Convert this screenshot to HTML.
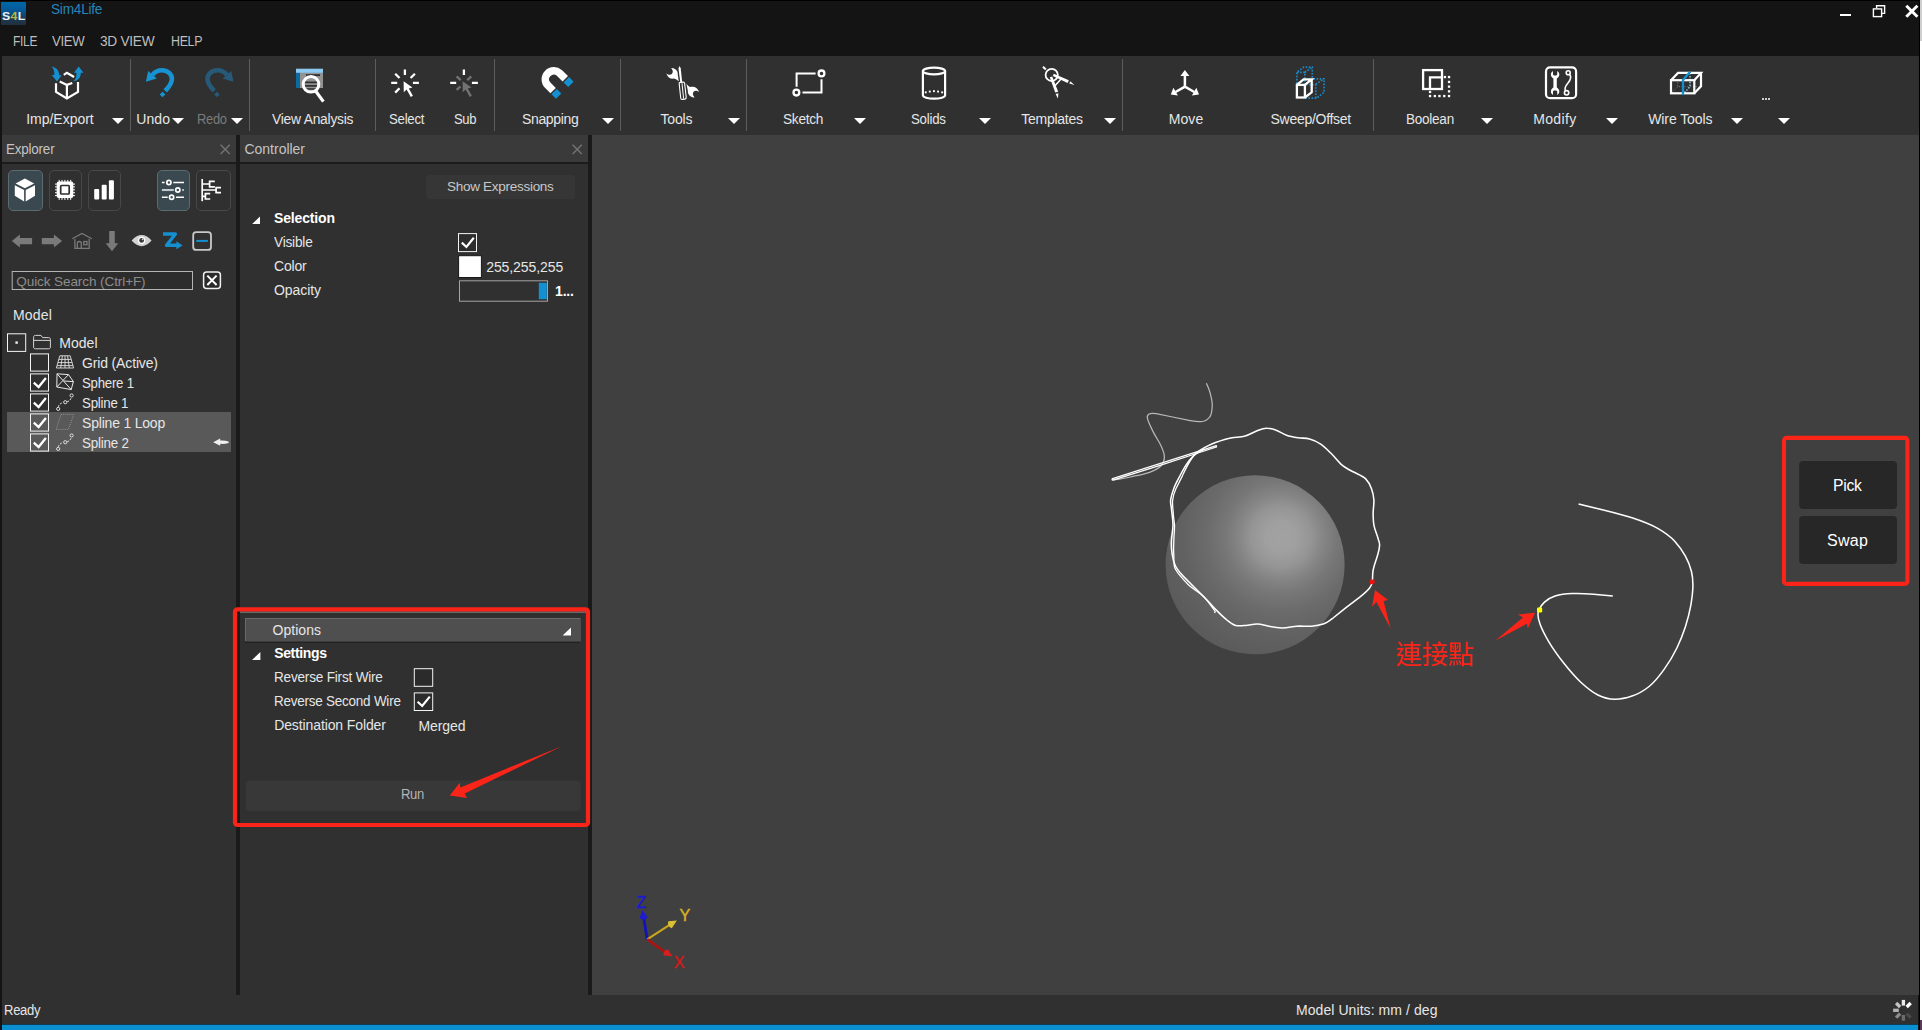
<!DOCTYPE html>
<html lang="en">
<head>
<meta charset="utf-8">
<title>Sim4Life</title>
<style>
html,body{margin:0;padding:0;background:#141414;}
body{width:1922px;height:1030px;overflow:hidden;font-family:"Liberation Sans","Noto Sans CJK TC",sans-serif;}
#app{position:relative;width:1922px;height:1030px;overflow:hidden;background:#141414;}
.t{position:absolute;white-space:pre;line-height:20px;height:20px;font-family:"Liberation Sans","Noto Sans CJK TC",sans-serif;}
.b{position:absolute;box-sizing:border-box;}
svg{position:absolute;overflow:visible;}
.sep{position:absolute;top:59px;width:1px;height:72px;background:#5c5c5c;}
.dd{position:absolute;top:118px;width:0;height:0;border-left:6px solid transparent;border-right:6px solid transparent;border-top:6px solid #fff;}
.cb{position:absolute;box-sizing:border-box;width:19px;height:19px;border:1px solid #e8e8e8;background:#2b2b2b;}
</style>
</head>

<body>
<div id="app">
<!-- window chrome -->
<div class="b" style="left:2px;top:56px;width:1917px;height:79px;background:#303030"></div>
<!-- explorer panel -->
<div class="b" style="left:2px;top:135px;width:234px;height:860px;background:#303030"></div>
<div class="b" style="left:2px;top:135px;width:234px;height:27px;background:#3a3a3a"></div>
<div class="b" style="left:2px;top:162px;width:234px;height:2px;background:#1c1c1c"></div>
<!-- controller panel -->
<div class="b" style="left:240px;top:135px;width:348px;height:860px;background:#303030"></div>
<div class="b" style="left:240px;top:135px;width:348px;height:27px;background:#3a3a3a"></div>
<div class="b" style="left:240px;top:162px;width:348px;height:2px;background:#1c1c1c"></div>
<!-- dividers -->
<div class="b" style="left:236px;top:135px;width:4px;height:860px;background:#1a1a1a"></div>
<div class="b" style="left:588px;top:135px;width:4px;height:860px;background:#1a1a1a"></div>
<!-- viewport -->
<div class="b" style="left:592px;top:135px;width:1327px;height:860px;background:#404040"></div>
<!-- status bar -->
<div class="b" style="left:2px;top:995px;width:1916px;height:30px;background:#303030"></div><div class="b" style="left:2px;top:1024px;width:1916px;height:1px;background:#123a52"></div>
<div class="b" style="left:2px;top:1025px;width:1916px;height:5px;background:#0a8fd0"></div>
<!-- right edge strips / top line -->
<div class="b" style="left:0;top:0;width:1922px;height:1px;background:#000"></div>
<div class="b" style="left:1919px;top:0;width:1px;height:1030px;background:#000"></div>
<div class="b" style="left:1920px;top:0;width:2px;height:1030px;background:#fff"></div>
<div class="b" style="left:1920px;top:0;width:2px;height:41px;background:#cfcfcf"></div>
<div class="b" style="left:1920px;top:1020px;width:2px;height:10px;background:#5a3a58"></div>
<!-- logo -->
<div class="b" style="left:1px;top:2px;width:25px;height:23px;border-radius:1px;background:linear-gradient(#0068a8 0%,#06599a 35%,#0d4a7a 55%,#1b3a58 70%,#222f3c 100%)"></div>
<span class="t" style="left:1.5px;top:5.800px;font-size:11px;font-weight:700;color:#e8f0f8;letter-spacing:0.3px;transform:scaleX(1.12);transform-origin:0 0">S<span style="color:#b8b840">4</span>L</span>
<!-- window buttons -->
<div class="b" style="left:1840px;top:13.5px;width:11px;height:2.7px;background:#fff"></div>
<svg style="left:1870px;top:2px" width="18" height="18" viewBox="1870 2 18 18"><path d="M1876.6 8.2V5.7h8v7.7h-2.6" fill="none" stroke="#fff" stroke-width="1.4"/><rect x="1873.4" y="8.9" width="8.2" height="7.7" fill="none" stroke="#fff" stroke-width="1.4"/></svg>
<svg style="left:1903px;top:2px" width="18" height="18" viewBox="1903 2 18 18"><path d="M1906.3 5.7L1917.4 16.8M1917.4 5.7L1906.3 16.8" fill="none" stroke="#fff" stroke-width="2.9"/></svg>
<!-- toolbar separators -->
<div class="sep" style="left:130px"></div><div class="sep" style="left:249px"></div><div class="sep" style="left:375px"></div><div class="sep" style="left:494px"></div><div class="sep" style="left:620px"></div><div class="sep" style="left:746px"></div><div class="sep" style="left:1122px"></div><div class="sep" style="left:1373px"></div>
<!-- dropdown arrows -->
<div class="dd" style="left:111.5px"></div><div class="dd" style="left:171.5px"></div><div class="dd" style="left:230.5px"></div><div class="dd" style="left:601.5px"></div><div class="dd" style="left:727.5px"></div><div class="dd" style="left:853.5px"></div><div class="dd" style="left:978.5px"></div><div class="dd" style="left:1103.5px"></div><div class="dd" style="left:1480.5px"></div><div class="dd" style="left:1605.5px"></div><div class="dd" style="left:1730.5px"></div><div class="dd" style="left:1777.5px"></div>
<!-- ellipsis -->
<div class="b" style="left:1762px;top:98px;width:2px;height:2px;background:#ccc"></div><div class="b" style="left:1765px;top:98px;width:2px;height:2px;background:#ccc"></div><div class="b" style="left:1768px;top:98px;width:2px;height:2px;background:#ccc"></div>
<!-- toolbar icons: one svg in page coordinates -->
<svg style="left:0;top:56px" width="1918" height="79" viewBox="0 56 1918 79">
<g fill="none" stroke="#fff" stroke-width="2.2" stroke-linejoin="miter">
<!-- imp/export -->
<path d="M56 83.2V91.9L66.9 98.5L78 91.9V82"/>
<path d="M66.9 98.5V84.9L59.7 81.4M66.9 84.9L72.3 83"/>
<path d="M63.8 74.9L66.9 72.7L74.1 77"/>
</g>
<g fill="#1490d0" stroke="none">
<path d="M51.6 66.4C56.5 67.3 59.3 70.8 59.2 75.2L61.6 75.2L57 81.6L51.7 75L54.3 75.1C54.6 71.5 54 69 51.6 66.4Z"/>
<path d="M78.7 66.4L83.5 72.8L80.8 72.8C80.9 77.6 78.2 80.6 73 81.6C76 79.3 76.6 76.5 76.5 72.8L74 72.8Z"/>
</g>
<!-- undo -->
<g id="undo" fill="#1793d3">
<path d="M145.9 81.8L148.2 70.9L156.8 78.6Z"/>
<path d="M152.5 74.9C154.8 71.9 158 70.3 161.9 70.3C167.5 70.3 171.9 74 171.9 78.9C171.900 83.400 169.200 86.600 165.200 90.800" fill="none" stroke="#1793d3" stroke-width="4.6"/>
<path d="M162.500 91.700L165.300 94.500L162.500 97.300L159.700 94.500Z"/>
</g>
<!-- redo: mirror about x=189.7 -->
<g transform="translate(379.4 0) scale(-1 1)" fill="#265a78">
<path d="M145.9 81.8L148.2 70.9L156.8 78.6Z"/>
<path d="M152.5 74.9C154.8 71.9 158 70.3 161.9 70.3C167.5 70.3 171.9 74 171.9 78.9C171.900 83.400 169.200 86.600 165.200 90.800" fill="none" stroke="#265a78" stroke-width="4.6"/>
<path d="M162.500 91.700L165.300 94.500L162.500 97.300L159.700 94.500Z"/>
</g>
<!-- view analysis -->
<rect x="296" y="72.8" width="27" height="15.2" fill="#929292"/>
<rect x="296" y="68.7" width="27" height="4.2" fill="#8ccaf2"/>
<rect x="296" y="72.9" width="4" height="15.1" fill="#0b6a9e"/>
<rect x="306" y="74.2" width="14" height="1.8" fill="#303030"/>
<circle cx="311" cy="84.3" r="7.8" fill="#929292"/>
<path d="M304 82.3h14M304 85.8h14M305 89h12" stroke="#303030" stroke-width="1.7"/>
<circle cx="311" cy="84.3" r="7.8" fill="none" stroke="#fff" stroke-width="3"/>
<path d="M315.8 91.2L323.4 101.6" stroke="#fff" stroke-width="3.2"/>
<!-- select -->
<g id="sel" stroke="#fff" stroke-width="2.3" fill="#fff">
<path d="M404.9 69.4V74.9M391.2 82.9H397.2M412.9 82.9H418.9" />
<path d="M395.2 73.7L399.5 78M414.9 73.7L410.6 78M395.2 92.6L399.5 88.3"/>
<path d="M403.6 81.2L403.8 92.2L406.6 89.6L410.8 96.9L412.9 95.7L408.8 88.6L412.4 87.4Z" stroke="none"/>
</g>
<!-- sub -->
<g stroke="#fff" stroke-width="2.3" fill="none">
<path d="M463.9 69.4V74.9M450.2 82.9H456.2M471.9 82.9H477.9" />
</g>
<g stroke="#727272" stroke-width="2.3" fill="#727272">
<path d="M456.600 76.300L460.700 80.100M471.300 76.300L467.200 80.100M456.600 89.900L460.500 86.500"/>
<path d="M462.6 81.2L462.8 92.2L465.6 89.6L469.8 96.9L471.9 95.7L467.8 88.6L471.4 87.4Z" stroke="none"/>
</g>
<!-- snapping magnet -->
<path d="M565.3 78.8L559.5 73A8.5 8.5 0 0 0 547.5 85L553.1 90.6" fill="none" stroke="#fff" stroke-width="7.6"/>
<path d="M566.300 79.800L570.900 84.400" fill="none" stroke="#1490d0" stroke-width="7.600"/>
<path d="M554.100 91.600L558.600 96.100" fill="none" stroke="#1490d0" stroke-width="7.600"/>
<!-- tools -->
<g fill="#fff" stroke="none">
<path d="M679.5 66L680.7 68.3L682.2 82.4L680.3 82.6L678.5 68.6Z"/>
<path d="M679.2 83.6C679 82.8 679.6 82.5 680.4 82.4L683 82.1C683.9 82 684.5 82.4 684.6 83.2L686.2 97.3C686.3 98.4 685.7 99 684.8 99.1L682.3 99.4C681.3 99.5 680.8 98.9 680.7 98Z" fill="none" stroke="#fff" stroke-width="1.1"/>
<path d="M682 83.2L683.6 98.6" stroke="#fff" stroke-width="1" fill="none"/>
<path d="M671.2 68C673.5 67.8 676.2 69 677.3 71.5C678 73.2 677.6 74.6 678 76L678.8 81.5C676.5 79.5 675 78.6 673.6 78.6C670.6 79 667.6 77.5 666.3 73.2C668 74.8 670.3 75.3 671.8 74C673.2 72.6 673.2 70.2 671.2 68Z"/>
<path d="M686.4 83.5C688 86 689.5 87.2 691.2 86.8C694.6 86 698 88 699.2 92.2C697.5 90.6 695.2 90.2 693.8 91.5C692.4 92.9 692.5 95.3 694.6 97.5C692.2 97.7 689.6 96.6 688.4 94.1C687.6 92.4 688 90.9 687.6 89.5Z"/>
</g>
<!-- sketch -->
<g fill="none" stroke="#fff">
<path d="M815.600 73.500H796.600V86.700M821.500 79.200V92.600H802.500" stroke-width="2"/>
<circle cx="821.500" cy="73.400" r="2.900" stroke-width="2.300"/>
<circle cx="796.400" cy="92.600" r="2.900" stroke-width="2.300"/>
</g>
<!-- solids -->
<g fill="none" stroke="#fff" stroke-width="2.2">
<ellipse cx="934" cy="71" rx="11.1" ry="3.4"/>
<path d="M922.9 71V95.3A11.1 3.4 0 0 0 945.1 95.3V71"/>
</g>
<g fill="#fff"><rect x="924.8" y="91.4" width="1.9" height="1.9"/><rect x="928.8" y="90.6" width="1.9" height="1.9"/><rect x="933" y="90.2" width="1.9" height="1.9"/><rect x="937.1" y="90.6" width="1.9" height="1.9"/><rect x="941.2" y="91.4" width="1.9" height="1.9"/></g>
<!-- templates: compass -->
<g fill="none" stroke="#fff">
<circle cx="1051.7" cy="74.9" r="6.1" stroke-width="1.8"/>
<path d="M1043 66.8L1045.8 69.4" stroke-width="2"/>
<path d="M1055 85.8L1061.5 78.4" stroke-width="1.5"/>
</g>
<g fill="#fff" stroke="none">
<path d="M1049.8 77.3L1052.2 76.6L1058.2 91.8L1055.2 92.6Z"/>
<path d="M1055.6 94L1058.4 93.2L1057.9 98.6Z"/>
<path d="M1052.8 76L1053.8 73.8L1068.8 80.3L1067.6 83Z"/>
<path d="M1069.3 83.6L1070.3 81.2L1074.4 84.9Z"/>
</g>
<!-- move -->
<g fill="none" stroke="#fff" stroke-width="2.5">
<path d="M1184.9 75V86.7L1175.5 92M1184.9 86.7L1194.3 92"/>
</g>
<g fill="#fff"><path d="M1184.9 70.1L1189.4 75.9H1180.4Z"/><path d="M1170.8 94.4L1173.4 87.7L1177.9 95.6Z"/><path d="M1199 94.4L1196.4 87.7L1191.9 95.6Z"/></g>
<!-- sweep/offset -->
<g fill="none" stroke="#1c88c4" stroke-width="1.7" stroke-dasharray="1.6 1.5">
<path d="M1296.9 83.5V72.2L1303.6 67.2H1312.3V78"/>
<path d="M1297 72.4H1304.9V83.4M1304.9 72.2L1312 67.4"/>
<path d="M1313.4 78.8H1324.1V92.3L1316.6 98.2H1306"/>
<path d="M1306 84.6H1315.8V98M1315.8 84.3L1323.8 79"/>
</g>
<g fill="none" stroke="#fff" stroke-width="2.3">
<rect x="1296.900" y="84.900" width="8" height="12.600"/>
<path d="M1296.900 84.900L1303.600 79.300H1311.700L1304.900 84.900M1311.700 79.300V92.300L1304.900 97.500"/>
</g>
<!-- boolean -->
<g fill="none" stroke="#fff" stroke-width="2.3">
<rect x="1423.1" y="70.1" width="18.9" height="18.9"/>
<path d="M1442 77.3H1430V89"/>
</g>
<g fill="#fff">
<rect x="1443.8" y="75.9" width="2.3" height="2.3"/><rect x="1447.9" y="75.9" width="2.3" height="2.3"/>
<rect x="1447.9" y="80.8" width="2.3" height="2.3"/><rect x="1447.9" y="85.5" width="2.3" height="2.3"/><rect x="1447.9" y="90.2" width="2.3" height="2.3"/><rect x="1447.9" y="94.9" width="2.3" height="2.3"/>
<rect x="1428.9" y="90.8" width="2.3" height="2.3"/><rect x="1428.9" y="94.9" width="2.3" height="2.3"/><rect x="1433.7" y="94.9" width="2.3" height="2.3"/><rect x="1438.3" y="94.9" width="2.3" height="2.3"/><rect x="1443.1" y="94.9" width="2.3" height="2.3"/>
</g>
<!-- modify -->
<rect x="1546" y="67.4" width="30.1" height="30.8" rx="4" ry="4" fill="none" stroke="#fff" stroke-width="2.2"/>
<g fill="#fff">
<path d="M1553 70.9C1551.2 72 1550.6 73.8 1551 75.4C1551.4 77 1552.4 77.6 1553.4 78.4V87.6C1552.4 88.4 1551.4 89 1551 90.6C1550.6 92.2 1551.2 94 1553 95.1V91.6C1553 90.2 1557.2 90.2 1557.2 91.6V95.1C1559 94 1559.6 92.2 1559.2 90.6C1558.8 89 1557.8 88.4 1556.8 87.6V78.4C1557.8 77.6 1558.8 77 1559.2 75.4C1559.6 73.8 1559 72 1557.2 70.9V74.4C1557.2 75.8 1553 75.8 1553 74.4Z"/>
</g>
<g fill="none" stroke="#fff" stroke-width="1.6">
<circle cx="1568.2" cy="72.7" r="2"/>
<circle cx="1566.6" cy="92.8" r="2.2"/>
<path d="M1569.6 74.3C1571.6 77 1570.6 80 1568 83C1565.4 86 1564 88 1565.4 90.8"/>
</g>
<!-- wire tools -->
<g fill="none" stroke="#8a8a8a" stroke-width="0.8" stroke-dasharray="1.2 1.6">
<path d="M1677.7 79.5V86.7H1701M1677.7 86.7L1671 93.5"/>
</g>
<g fill="none" stroke="#8cc6e8" stroke-width="1.5" stroke-dasharray="1.5 1.4">
<path d="M1690 73V86.7L1683.6 93.5"/>
</g>
<g fill="none" stroke="#fff" stroke-width="2.2">
<rect x="1671" y="80.200" width="23.300" height="13.100"/>
<path d="M1671 80.200L1678 72.900H1701L1694.300 80.200M1701 72.900V86.300L1694.300 93.300"/>
</g>
<path d="M1683 95V80L1690.4 71.6" fill="none" stroke="#1490d0" stroke-width="2.3"/>
</svg>
<!-- explorer -->
<svg style="left:220px;top:144px" width="11" height="11" viewBox="0 0 11 11"><path d="M0.6 0.8L9.8 10M9.8 0.8L0.6 10" stroke="#727272" stroke-width="1.500" fill="none"/></svg>
<svg style="left:572px;top:144px" width="11" height="11" viewBox="0 0 11 11"><path d="M0.6 0.8L9.8 10M9.8 0.8L0.6 10" stroke="#727272" stroke-width="1.500" fill="none"/></svg>
<div class="b" style="left:8px;top:170px;width:35px;height:41px;border:1px solid #5b6b72;border-radius:5px;background:#3a494f"></div>
<div class="b" style="left:49px;top:170px;width:33px;height:41px;border:1px solid #484848;border-radius:5px"></div>
<div class="b" style="left:88px;top:170px;width:33px;height:41px;border:1px solid #484848;border-radius:5px"></div>
<div class="b" style="left:157px;top:170px;width:33px;height:41px;border:1px solid #5b6b72;border-radius:5px;background:#3a494f"></div>
<div class="b" style="left:196px;top:170px;width:35px;height:41px;border:1px solid #484848;border-radius:5px"></div>
<svg style="left:0;top:164px" width="236" height="300" viewBox="0 164 236 300">
<!-- cube -->
<g fill="#fff">
<path d="M24.9 178.6L34.2 183.4L24.9 188.2L15.6 183.4Z"/>
<path d="M14.8 185.2L24.1 190V201.4L14.8 195.8Z"/>
<path d="M35 185.2L25.7 190V201.4L35 195.8Z"/>
</g>
<!-- chip -->
<g fill="#fff">
<rect x="56.7" y="181.5" width="16.6" height="16.6" rx="2"/>
<g id="teeth">
<rect x="58.7" y="179.9" width="1" height="20"/><rect x="61.5" y="179.9" width="1" height="20"/><rect x="64.4" y="179.9" width="1" height="20"/><rect x="67.3" y="179.9" width="1" height="20"/><rect x="70.2" y="179.9" width="1" height="20"/>
<rect x="55" y="183.6" width="20" height="1"/><rect x="55" y="186.4" width="20" height="1"/><rect x="55" y="189.3" width="20" height="1"/><rect x="55" y="192.2" width="20" height="1"/><rect x="55" y="195.1" width="20" height="1"/>
</g>
</g>
<rect x="60.7" y="185.5" width="8.5" height="8.5" rx="0.8" fill="#fff" stroke="#2e2e2e" stroke-width="1.7"/>
<!-- bars -->
<g fill="#fff"><rect x="94.2" y="189" width="5" height="10.6" rx="1"/><rect x="101.7" y="184.7" width="5" height="14.9" rx="1"/><rect x="108.9" y="180.3" width="5" height="19.3" rx="1"/></g>
<!-- sliders -->
<g fill="none" stroke="#fff" stroke-width="1.5">
<path d="M161.9 182.5H164.6M173.3 182.5H184"/><circle cx="168.9" cy="182.5" r="2.1" stroke-width="1.7"/>
<path d="M161.9 190H173.8" stroke="#c3cacd" stroke-width="2.1"/><circle cx="177.8" cy="190" r="2.1" stroke-width="1.7"/><rect x="182.2" y="189.1" width="1.8" height="1.8" fill="#c3cacd" stroke="none"/>
<path d="M161.9 197.3H167.7M176 197.3H184"/><circle cx="171.6" cy="197.3" r="2.1" stroke-width="1.7"/>
</g>
<!-- tree icon -->
<g fill="none" stroke="#fff" stroke-width="1.7">
<path d="M202.2 179V201.2"/>
<path d="M202.2 184H209.5M214.8 181.3H209.6V186.8H214.8" />
<path d="M202.2 190H216M221 187.6H216.1V192.7H221"/>
<path d="M202.2 196.3H205.3M210.2 193.6H205.4V199H210.2"/>
</g>
<!-- nav icons -->
<g fill="#7a7a7a">
<path d="M11.8 241L19.9 234.6V237.9H32.1V244.2H19.9V247.4Z"/>
<path d="M62.1 241L53.9 234.6V237.9H41.8V244.2H53.9V247.4Z"/>
<path d="M109.2 231H114.8V243.2H118.3L112 251.2L105.7 243.2H109.2Z"/>
</g>
<g fill="none" stroke="#7a7a7a" stroke-width="1.3">
<path d="M72.2 238.8L82 233.4L91.8 238.8"/>
<path d="M74.9 239V248.4H89.2V239"/>
<path d="M77.3 248.4V243.5A2 2 0 0 1 81.3 243.5V248.4"/>
<rect x="83.8" y="241.5" width="3.2" height="3.2"/>
</g>
<!-- eye -->
<path d="M131.6 240.6C135 236.6 138.4 235 141.6 235C144.8 235 148.2 236.6 151.6 240.6C148.2 244.6 144.8 246.2 141.6 246.2C138.4 246.2 135 244.6 131.6 240.6Z" fill="#d2d2d2"/>
<circle cx="141.6" cy="240.4" r="3.6" fill="#fff"/>
<circle cx="141.6" cy="240.4" r="2.4" fill="#3a3a3a"/>
<circle cx="142.6" cy="239.4" r="0.8" fill="#d2d2d2"/>
<!-- z arrow -->
<path d="M163 234H175.400L166.600 245.300H177" fill="none" stroke="#1490d0" stroke-width="3.400" stroke-linejoin="round"/>
<path d="M176.4 241.3L182.6 245.4L176.4 249.2Z" fill="#1490d0"/>
<!-- minus box -->
<rect x="193.2" y="232.1" width="17.8" height="17.8" rx="3" fill="none" stroke="#c8c8c8" stroke-width="1.8"/>
<path d="M196.2 240.9H207.9" stroke="#1490d0" stroke-width="2"/>
<!-- search -->
<rect x="12.2" y="271.5" width="180.3" height="18" fill="#2c2c2c" stroke="#b4b4b4" stroke-width="1"/>
<rect x="203.6" y="272" width="16.8" height="16.4" rx="3" fill="#2a2a2a" stroke="#f0f0f0" stroke-width="1.5"/>
<path d="M207.3 275.6L216.6 285M216.6 275.6L207.3 285" stroke="#fff" stroke-width="2" fill="none"/>
<!-- tree -->
<rect x="7" y="412" width="224" height="40" fill="#595959"/>
<rect x="7.5" y="333.8" width="18.2" height="17.6" fill="none" stroke="#f4f4f4" stroke-width="1"/>
<rect x="15.400" y="341.400" width="2.400" height="2.400" fill="#f0f0f0"/>
<!-- folder -->
<path d="M33.6 337.2C33.6 336 34.2 335.4 35.4 335.4H41L42.6 337.6H48.6C49.8 337.6 50.4 338.2 50.4 339.4V347C50.4 348.2 49.8 348.8 48.6 348.8H35.4C34.2 348.8 33.6 348.2 33.6 347Z M33.6 340.4H50.4" fill="none" stroke="#d4d4d4" stroke-width="1"/>
<!-- checkboxes -->
<g fill="#2f2f2f" stroke="#f4f4f4" stroke-width="1">
<rect x="30.5" y="353.9" width="18" height="17.2"/><rect x="30.5" y="373.9" width="18" height="17.2"/><rect x="30.5" y="393.9" width="18" height="17.2"/>
<rect x="30.5" y="413.9" width="18" height="17.2" fill="#595959"/><rect x="30.5" y="433.9" width="18" height="17.2" fill="#595959"/>
</g>
<g fill="none" stroke="#fff" stroke-width="2.3">
<path d="M33.8 382.6L38.6 387L45.9 378"/><path d="M33.8 402.6L38.6 407L45.9 398"/><path d="M33.8 422.6L38.6 427L45.9 418"/><path d="M33.8 442.6L38.6 447L45.9 438"/>
</g>
<!-- grid icon -->
<g fill="none" stroke="#e0e0e0" stroke-width="0.9">
<path d="M59.8 355.8H70.2L73.6 368H56.4Z"/>
<path d="M58.8 359.4H71.2M57.9 362.6H72.1M57 365.6H73"/>
<path d="M62.4 355.8L60.7 368M65 355.8V368M67.6 355.8L69.3 368"/>
</g>
<!-- sphere icon -->
<g fill="none" stroke="#e8e8e8" stroke-width="1">
<path d="M57 373.8L68.5 374.6L73.4 381.6L71.2 389.6L56.8 387Z"/>
<path d="M57 373.8L71.2 389.6M56.8 387L68.5 374.6M64 381L73.4 381.6"/>
</g>
<!-- spline icon -->
<g id="spl" fill="none" stroke="#e0e0e0" stroke-width="1">
<circle cx="58.2" cy="408.9" r="1.6"/><circle cx="65.3" cy="402.2" r="1.6"/><circle cx="71.6" cy="395.5" r="1.6"/>
<path d="M58.4 406.8C58.8 404.6 60.6 403 63.4 402.6M67.2 401.8C69.6 401 70.8 399.6 71.2 397.6" stroke-dasharray="2 1.3"/>
</g>
<g fill="none" stroke="#e0e0e0" stroke-width="1" transform="translate(0 40)">
<circle cx="58.2" cy="408.9" r="1.6"/><circle cx="65.3" cy="402.2" r="1.6"/><circle cx="71.6" cy="395.5" r="1.6"/>
<path d="M58.4 406.8C58.8 404.6 60.6 403 63.4 402.6M67.2 401.8C69.6 401 70.8 399.6 71.2 397.6" stroke-dasharray="2 1.3"/>
</g>
<!-- loop icon -->
<path d="M61 414.4H73.8L68.4 429.4H56.2Z" fill="none" stroke="#9a9a9a" stroke-width="0.9" stroke-dasharray="1 1.1"/>
<!-- row arrow -->
<path d="M213.2 442.2L220.2 438.6V440.6C223 440.2 226 440.8 228.6 441.4V443C226 443.6 223 444.2 220.2 443.8V445.8Z" fill="#f0f0f0"/>
</svg>
<!-- controller -->
<div class="b" style="left:425.5px;top:175px;width:149.5px;height:23.5px;background:#363636;border-radius:4px"></div>
<svg style="left:240px;top:164px" width="348" height="700" viewBox="240 164 348 700">
<path d="M260 216.4V224H252.2Z" fill="#fff"/>
<rect x="458.5" y="233.600" width="18" height="18" fill="#2d2d2d" stroke="#f4f4f4" stroke-width="1"/>
<path d="M461.800 242.600L466.400 247L473.800 237.800" fill="none" stroke="#fff" stroke-width="2.2"/>
<rect x="458.600" y="255.700" width="22.800" height="21.800" fill="#fff" stroke="#181818" stroke-width="1"/>
<rect x="459.500" y="280.800" width="88" height="20.400" fill="#303030" stroke="#a4a4a4" stroke-width="1"/>
<rect x="538.800" y="282.800" width="8" height="16.400" fill="#1490d0"/>
<!-- options header -->
<rect x="245" y="618" width="335.500" height="24.700" fill="#6a6a6a"/>
<rect x="245" y="641.400" width="335.500" height="1.300" fill="#0c0c0c"/>
<rect x="246" y="619" width="334.500" height="22.400" fill="#4f4f4f"/>
<path d="M571 627.6V635.6H562.6Z" fill="#fff"/>
<path d="M260.4 652V660H252Z" fill="#fff"/>
<rect x="414.3" y="668.7" width="18.4" height="17.6" fill="#2b2b2b" stroke="#f4f4f4" stroke-width="1"/>
<rect x="414.3" y="692.9" width="18.4" height="17.6" fill="#2b2b2b" stroke="#f4f4f4" stroke-width="1"/>
<path d="M417.6 701.8L422.2 706L429.8 696.6" fill="none" stroke="#fff" stroke-width="2.2"/>
<rect x="245.8" y="780.6" width="335" height="30.4" rx="4" fill="#383838"/>
<!-- red annotations -->
<rect x="240" y="611.600" width="346" height="1" fill="#8e8e8e"/>
<rect x="235" y="609.300" width="353" height="215.700" rx="2.500" fill="none" stroke="#fa2418" stroke-width="4.200"/>
<path d="M449.800 795.500L459.700 782.700L460.400 787.400L562.400 745.900L464.800 793.600L466.900 798Z" fill="#fa2418"/>
</svg>
<!-- viewport -->
<svg style="left:592px;top:135px" width="1326" height="860" viewBox="592 135 1326 860">
<defs>
<radialGradient id="sph" gradientUnits="userSpaceOnUse" cx="1281" cy="537" r="125" fx="1281" fy="537">
<stop offset="0" stop-color="#a2a2a2"/><stop offset="0.12" stop-color="#a0a0a0"/><stop offset="0.24" stop-color="#959595"/><stop offset="0.34" stop-color="#858585"/><stop offset="0.45" stop-color="#777777"/><stop offset="0.6" stop-color="#6b6b6b"/><stop offset="0.8" stop-color="#616161"/><stop offset="1" stop-color="#5b5b5b"/>
</radialGradient>
</defs>
<circle cx="1255.1" cy="564.8" r="89.5" fill="url(#sph)"/>
<!-- spline 1 (gray squiggle) -->
<path d="M1206.4 383.2C1208.6 388 1210 391.6 1210.6 394.8C1211.8 399.6 1212.6 402.6 1212.2 406.3C1212 411.4 1211.6 414.6 1209.7 417C1207.8 419.6 1205.6 421 1202.3 421.5C1197.4 422.2 1193.6 421.2 1189.1 420.3L1172.6 417L1156.100 413.7C1153 413.1 1150.600 413 1148.7 414.2C1147 415.300 1147 416.8 1147.5 418.7C1148.6 423 1151 427.200 1152.8 431.100C1155.4 436.400 1159 441.400 1161.100 445.9C1163 450 1164.600 453.8 1164.400 457.500C1164.200 460.800 1163.400 463.400 1161.100 465.700C1158 468.700 1154.400 470.600 1149.500 472.300C1144.200 474.100 1138.600 475.200 1133 476.400C1128.600 477.400 1124.200 478.500 1119.800 479.200L1113.200 479.900" fill="none" stroke="#b8b8b8" stroke-width="1.25"/>
<!-- needle -->
<path d="M1216.300 445.600L1112.600 478.700C1111.800 479.100 1111.800 480 1113 480.200L1160 465.300L1199.500 452.500L1216.500 447Z" fill="none" stroke="#fff" stroke-width="1.3" stroke-linejoin="round"/>
<!-- loop outer -->
<path d="M1199 450.900C1204.600 447.500 1210 444.600 1215.500 442.600C1221 440.500 1226.500 438.600 1232 437.700C1236.500 437 1240.800 437.300 1245.200 436C1250 434.600 1254 431.800 1258.400 430.200C1261.500 429 1264.500 428 1267.500 428.300C1270.200 428.500 1272.500 428.800 1274.900 429.700C1279 431.200 1282.500 433.800 1286.500 435.200C1290.200 436.500 1294 437.100 1298 437.700C1302 438.300 1305.800 438 1309.600 439C1313.700 440.100 1317.500 441.800 1321.100 444.300C1324.800 446.900 1327.800 450.200 1331 453.300C1334.500 456.800 1337.400 460.800 1340.900 464.100C1345 467.800 1349.600 470 1354.100 472.300C1358.100 474.300 1362.600 475.800 1365.700 478.900C1368.500 481.700 1370.200 485.200 1371.500 488.800C1372.900 492.600 1373.700 496.400 1373.900 500.400C1374.100 504.800 1373.100 509.200 1373.100 513.600C1373.200 517.500 1373.200 521.300 1373.900 525.100C1374.900 530.200 1377.200 535 1378.500 540C1379.100 541.600 1379.600 543 1379.600 544.600C1379.600 549.200 1378.200 553.500 1376.800 557.800C1375.400 562.200 1373.800 566.500 1373 571C1372.400 574.600 1372.800 578.200 1372.300 581.700C1372 584.200 1371 586.400 1369.400 588.300C1366.600 591.800 1363 594.600 1359.500 597.400L1346.300 607.300L1333.100 618C1330 620.400 1326.900 622.900 1323.200 624.100C1319.500 625.400 1315.500 625.900 1311.600 626.200C1306.700 626.600 1301.700 625.900 1296.800 626.200C1291.800 626.500 1286.900 628.100 1281.900 627.900C1277.400 627.700 1273.100 627 1268.700 626.200C1264.800 625.500 1261.100 624.200 1257.200 624.100C1253.300 624 1249.500 625.200 1245.600 625.400C1242.300 625.600 1238.900 626 1235.700 625.400C1232.700 624.800 1230 622.500 1227.500 620.500C1223.900 617.700 1220.800 614.500 1217.600 611.400C1213.600 607.400 1209.900 603.100 1206 599L1194.500 587.500L1182.900 575.900C1180.200 572.800 1177.300 569.700 1175.500 566C1173.700 562.400 1172.800 558.400 1172.200 554.500C1171.500 550.100 1171.200 545.700 1171.400 541.300C1171.600 535.800 1173 530.300 1173 524.800C1173 519.300 1171.800 513.800 1171.400 508.300C1171.100 505.500 1170.300 503 1170.600 500.400C1171.100 495.800 1172.700 491.500 1174.300 487.200C1176 482.600 1178.600 478.400 1180.900 474C1183.400 469.400 1185.900 464.900 1189.100 460.800C1192.100 457 1195.200 453.400 1199 450.900Z" fill="none" stroke="#fff" stroke-width="1.550" stroke-linejoin="round"/>
<!-- loop inner second strand -->
<path d="M1204 449.200C1199.600 451.300 1195.300 453.800 1192.400 457.500C1188.300 463 1185.400 469.400 1182.500 475.600L1175.900 488.800C1174.200 492.500 1173 496.400 1172.600 500.400C1172.200 505.300 1173.200 510.300 1173.400 515.200C1173.600 518.500 1174.400 521.700 1174.500 525C1174.700 530.400 1173.800 535.900 1173.800 541.300C1173.700 545.700 1173.400 550.100 1173.800 554.500C1174.200 559.500 1173 564.800 1175.500 569.300C1178.600 574.900 1183.400 579.700 1187.900 584.200C1192.500 588.600 1197.900 591.700 1202.700 595.700C1205.800 598.400 1208.400 602.200 1211 605.600L1215.200 611.400L1214.600 613" fill="none" stroke="#fff" stroke-width="1.3" stroke-linejoin="round"/>
<!-- spline 2 -->
<path d="M1578.600 503.900L1604.300 510.300C1613.600 512.600 1622.900 514.900 1632 517.800C1640.800 520.700 1649.700 523.800 1657.700 528.400C1664 532 1670 536 1674.700 541.300C1679 546 1682.600 551 1685.400 556.200C1688 561 1690 566 1691.400 571.200C1692.600 576 1693 581 1692.900 586.100C1692.800 592.500 1691.900 599 1690.800 605.300C1689.500 612.500 1687.600 619.700 1685.400 626.700C1683 634 1680.200 641.100 1676.900 648C1673.300 655.400 1669 662.700 1664.100 669.400C1659.700 675.600 1654.900 681.800 1649.100 686.500C1644 690.600 1638.200 694 1632 696.100C1626.500 698 1620.700 699.400 1614.900 699.300C1609 699.200 1603.100 697.700 1597.900 695C1591.500 691.700 1586 687 1580.800 682.200C1574.500 676.300 1569 669.700 1563.700 663C1558.300 656.200 1553.100 649 1548.700 641.600C1545.400 636.100 1542.400 630.500 1540.200 624.600C1538.900 621.200 1537.800 617.500 1538 613.900C1538.100 612.400 1538.400 611 1539.100 609.600C1540.400 606.800 1542.200 604.200 1544.500 602.100C1547.500 599.400 1551.300 597.300 1555.100 596.100C1560.600 594.400 1566.500 593.800 1572.200 593.600C1579.300 593.300 1586.500 593.700 1593.600 594.200L1612.800 596.100" fill="none" stroke="#fff" stroke-width="1.550"/>
<!-- dots -->
<rect x="1369.800" y="579.600" width="4.700" height="4.700" rx="1" fill="#f01010"/>
<rect x="1537" y="607.600" width="5.200" height="4.800" rx="1.200" fill="#ffff00"/>
<!-- red arrows -->
<path d="M1375 590L1388 599.900L1383.500 600.900L1390.700 628.800L1376.400 601.900L1372 606.700Z" fill="#fa2418"/>
<path d="M1535.100 612.700L1517.900 614.500L1522.900 617.400L1495.200 640.700L1526.900 623.800L1527.800 628.400Z" fill="#fa2418"/>
<text x="1395.500" y="664.300" font-family="'Liberation Sans','Noto Sans CJK TC',sans-serif" font-size="26.200" fill="#fa2418">連接點</text>
<!-- pick / swap -->
<rect x="1799.200" y="461" width="97.800" height="48" rx="4" fill="#272727"/>
<rect x="1799.200" y="516" width="97.800" height="48" rx="4" fill="#272727"/>
<rect x="1784" y="437.900" width="123.400" height="146" rx="2.500" fill="none" stroke="#fa2418" stroke-width="4.100"/>
<!-- triad -->
<path d="M647.200 939.400L643.400 916" stroke="#1212b8" stroke-width="2.800" fill="none"/>
<path d="M642.600 910.200L647.800 917.400C646 919.800 641 920.200 639.600 917.800Z" fill="#1c1cd0"/>
<path d="M647.200 939.400L670 924.600" stroke="#c8a61e" stroke-width="2.200" fill="none"/>
<path d="M676.900 920.400L671.800 928.200C669 927.600 667.200 923.600 668.400 921.200Z" fill="#dcc032"/>
<path d="M647.200 939.400L666 952.800" stroke="#b01212" stroke-width="2.600" fill="none"/>
<path d="M672.300 956.200L663.600 955.600C662.800 953 665.400 949.200 668 949.600Z" fill="#d42020"/>
<text x="636.400" y="907.700" font-family="'Liberation Sans',sans-serif" font-size="16.200" fill="#1a1ad0" stroke="#1a1ad0" stroke-width="0.400">Z</text>
<text x="679.400" y="921.100" font-family="'Liberation Sans',sans-serif" font-size="16.200" fill="#d8b224" stroke="#d8b224" stroke-width="0.400">Y</text>
<text x="673.800" y="967.700" font-family="'Liberation Sans',sans-serif" font-size="16.200" fill="#d41a1a" stroke="#d41a1a" stroke-width="0.400">X</text>
</svg>
<!-- status spinner -->
<svg style="left:1890px;top:997px" width="28" height="28" viewBox="1890 997 28 28">
<g stroke-width="3.300" fill="none">
<path d="M1903.400 1005.600V999.900" stroke="#ececec"/>
<path d="M1906.700 1007L1910.700 1003" stroke="#ffffff"/>
<path d="M1900.100 1007L1896.100 1003" stroke="#c4c4c4"/>
<path d="M1898.800 1010.300H1893.100" stroke="#b2b2b2"/>
<path d="M1900.100 1013.600L1896.100 1017.600" stroke="#8c8c8c"/>
<path d="M1903.400 1015V1020.700" stroke="#6c6c6c"/>
<path d="M1906.700 1013.600L1910.700 1017.600" stroke="#4a4a4a"/>
</g>
</svg>

<!-- text -->
<span class="t" style="left:51.0px;top:-1.0px;font-size:14px;color:#2686ba;font-weight:400;letter-spacing:-0.23px;transform:scaleX(0.973);transform-origin:0 50%">Sim4Life</span>
<span class="t" style="left:12.5px;top:30.6px;font-size:14px;color:#bebebe;font-weight:400;letter-spacing:-0.30px;transform:scaleX(0.854);transform-origin:0 50%">FILE</span>
<span class="t" style="left:52.3px;top:30.6px;font-size:14px;color:#bebebe;font-weight:400;letter-spacing:-0.36px;transform:scaleX(0.942);transform-origin:0 50%">VIEW</span>
<span class="t" style="left:100.3px;top:30.6px;font-size:14px;color:#bebebe;font-weight:400;letter-spacing:-0.29px;transform:scaleX(0.979);transform-origin:0 50%">3D VIEW</span>
<span class="t" style="left:170.5px;top:30.6px;font-size:14px;color:#bebebe;font-weight:400;letter-spacing:-0.37px;transform:scaleX(0.888);transform-origin:0 50%">HELP</span>
<span class="t" style="left:26.2px;top:109.0px;font-size:14px;color:#e6e6e6;font-weight:400;letter-spacing:-0.02px">Imp/Export</span>
<span class="t" style="left:136.2px;top:109.0px;font-size:14px;color:#e6e6e6;font-weight:400;letter-spacing:0.11px">Undo</span>
<span class="t" style="left:197.0px;top:109.0px;font-size:14px;color:#7a7a7a;font-weight:400;letter-spacing:-0.33px;transform:scaleX(0.924);transform-origin:0 50%">Redo</span>
<span class="t" style="left:271.7px;top:109.0px;font-size:14px;color:#e6e6e6;font-weight:400;letter-spacing:-0.21px;transform:scaleX(0.984);transform-origin:0 50%">View Analysis</span>
<span class="t" style="left:388.7px;top:109.0px;font-size:14px;color:#e6e6e6;font-weight:400;letter-spacing:-0.23px;transform:scaleX(0.940);transform-origin:0 50%">Select</span>
<span class="t" style="left:453.7px;top:109.0px;font-size:14px;color:#e6e6e6;font-weight:400;letter-spacing:-0.37px;transform:scaleX(0.931);transform-origin:0 50%">Sub</span>
<span class="t" style="left:522.0px;top:109.0px;font-size:14px;color:#e6e6e6;font-weight:400;letter-spacing:-0.35px">Snapping</span>
<span class="t" style="left:660.5px;top:109.0px;font-size:14px;color:#e6e6e6;font-weight:400;letter-spacing:-0.17px">Tools</span>
<span class="t" style="left:782.5px;top:109.0px;font-size:14px;color:#e6e6e6;font-weight:400;letter-spacing:-0.26px;transform:scaleX(0.975);transform-origin:0 50%">Sketch</span>
<span class="t" style="left:910.5px;top:109.0px;font-size:14px;color:#e6e6e6;font-weight:400;letter-spacing:-0.23px;transform:scaleX(0.946);transform-origin:0 50%">Solids</span>
<span class="t" style="left:1021.2px;top:109.0px;font-size:14px;color:#e6e6e6;font-weight:400;letter-spacing:-0.25px">Templates</span>
<span class="t" style="left:1168.7px;top:109.0px;font-size:14px;color:#e6e6e6;font-weight:400;letter-spacing:0.09px">Move</span>
<span class="t" style="left:1270.5px;top:109.0px;font-size:14px;color:#e6e6e6;font-weight:400;letter-spacing:-0.28px">Sweep/Offset</span>
<span class="t" style="left:1405.5px;top:109.0px;font-size:14px;color:#e6e6e6;font-weight:400;letter-spacing:-0.26px;transform:scaleX(0.967);transform-origin:0 50%">Boolean</span>
<span class="t" style="left:1533.2px;top:109.0px;font-size:14px;color:#e6e6e6;font-weight:400;letter-spacing:0.35px">Modify</span>
<span class="t" style="left:1648.2px;top:109.0px;font-size:14px;color:#e6e6e6;font-weight:400;letter-spacing:-0.09px">Wire Tools</span>
<span class="t" style="left:6.0px;top:139.0px;font-size:14px;color:#c4c4c4;font-weight:400;letter-spacing:-0.22px;transform:scaleX(0.961);transform-origin:0 50%">Explorer</span>
<span class="t" style="left:244.5px;top:139.0px;font-size:14px;color:#c4c4c4;font-weight:400;letter-spacing:-0.02px">Controller</span>
<span class="t" style="left:447.0px;top:176.6px;font-size:13.5px;color:#c8c8c8;font-weight:400;letter-spacing:-0.28px">Show Expressions</span>
<span class="t" style="left:274.0px;top:208.0px;font-size:14px;color:#ffffff;font-weight:700;letter-spacing:-0.16px">Selection</span>
<span class="t" style="left:274.0px;top:232.3px;font-size:14px;color:#e6e6e6;font-weight:400;letter-spacing:-0.21px;transform:scaleX(0.976);transform-origin:0 50%">Visible</span>
<span class="t" style="left:274.0px;top:256.1px;font-size:14px;color:#e6e6e6;font-weight:400;letter-spacing:-0.19px">Color</span>
<span class="t" style="left:486.2px;top:257.3px;font-size:14px;color:#e6e6e6;font-weight:400;letter-spacing:-0.08px">255,255,255</span>
<span class="t" style="left:274.0px;top:280.4px;font-size:14px;color:#e6e6e6;font-weight:400;letter-spacing:-0.08px">Opacity</span>
<span class="t" style="left:555.0px;top:280.9px;font-size:14px;color:#ffffff;font-weight:700;letter-spacing:-0.16px">1...</span>
<span class="t" style="left:16.3px;top:272.0px;font-size:13.5px;color:#8c8c8c;font-weight:400;letter-spacing:-0.08px">Quick Search (Ctrl+F)</span>
<span class="t" style="left:13.0px;top:304.9px;font-size:14px;color:#e6e6e6;font-weight:400;letter-spacing:0.21px">Model</span>
<span class="t" style="left:59.2px;top:332.5px;font-size:14px;color:#e6e6e6;font-weight:400;letter-spacing:0.06px">Model</span>
<span class="t" style="left:82.0px;top:352.6px;font-size:14px;color:#e6e6e6;font-weight:400;letter-spacing:-0.15px">Grid (Active)</span>
<span class="t" style="left:82.0px;top:372.6px;font-size:14px;color:#e6e6e6;font-weight:400;letter-spacing:-0.24px;transform:scaleX(0.943);transform-origin:0 50%">Sphere 1</span>
<span class="t" style="left:82.0px;top:392.6px;font-size:14px;color:#e6e6e6;font-weight:400;letter-spacing:-0.22px;transform:scaleX(0.948);transform-origin:0 50%">Spline 1</span>
<span class="t" style="left:82.0px;top:412.7px;font-size:14px;color:#e6e6e6;font-weight:400;letter-spacing:-0.20px">Spline 1 Loop</span>
<span class="t" style="left:82.0px;top:432.7px;font-size:14px;color:#e6e6e6;font-weight:400;letter-spacing:-0.22px;transform:scaleX(0.958);transform-origin:0 50%">Spline 2</span>
<span class="t" style="left:272.5px;top:620.0px;font-size:14px;color:#e6e6e6;font-weight:400;letter-spacing:0.04px">Options</span>
<span class="t" style="left:274.2px;top:642.9px;font-size:14px;color:#ffffff;font-weight:700;letter-spacing:-0.35px">Settings</span>
<span class="t" style="left:274.2px;top:667.4px;font-size:14px;color:#e6e6e6;font-weight:400;letter-spacing:-0.20px;transform:scaleX(0.968);transform-origin:0 50%">Reverse First Wire</span>
<span class="t" style="left:274.2px;top:691.2px;font-size:14px;color:#e6e6e6;font-weight:400;letter-spacing:-0.23px;transform:scaleX(0.961);transform-origin:0 50%">Reverse Second Wire</span>
<span class="t" style="left:274.2px;top:714.8px;font-size:14px;color:#e6e6e6;font-weight:400;letter-spacing:-0.11px">Destination Folder</span>
<span class="t" style="left:418.4px;top:715.8px;font-size:14px;color:#e6e6e6;font-weight:400;letter-spacing:-0.07px">Merged</span>
<span class="t" style="left:401.4px;top:784.4px;font-size:14px;color:#b4b4b4;font-weight:400;letter-spacing:-0.39px;transform:scaleX(0.935);transform-origin:0 50%">Run</span>
<span class="t" style="left:1833.4px;top:475.5px;font-size:16px;color:#ffffff;font-weight:400;letter-spacing:-0.30px;transform:scaleX(0.982);transform-origin:0 50%">Pick</span>
<span class="t" style="left:1827.0px;top:530.5px;font-size:16px;color:#ffffff;font-weight:400;letter-spacing:0.32px">Swap</span>
<span class="t" style="left:4.4px;top:999.9px;font-size:14px;color:#e6e6e6;font-weight:400;letter-spacing:-0.30px;transform:scaleX(0.932);transform-origin:0 50%">Ready</span>
<span class="t" style="left:1296.0px;top:999.9px;font-size:14px;color:#e6e6e6;font-weight:400;letter-spacing:0.07px">Model Units: mm / deg</span>
</div>
</body>
</html>
